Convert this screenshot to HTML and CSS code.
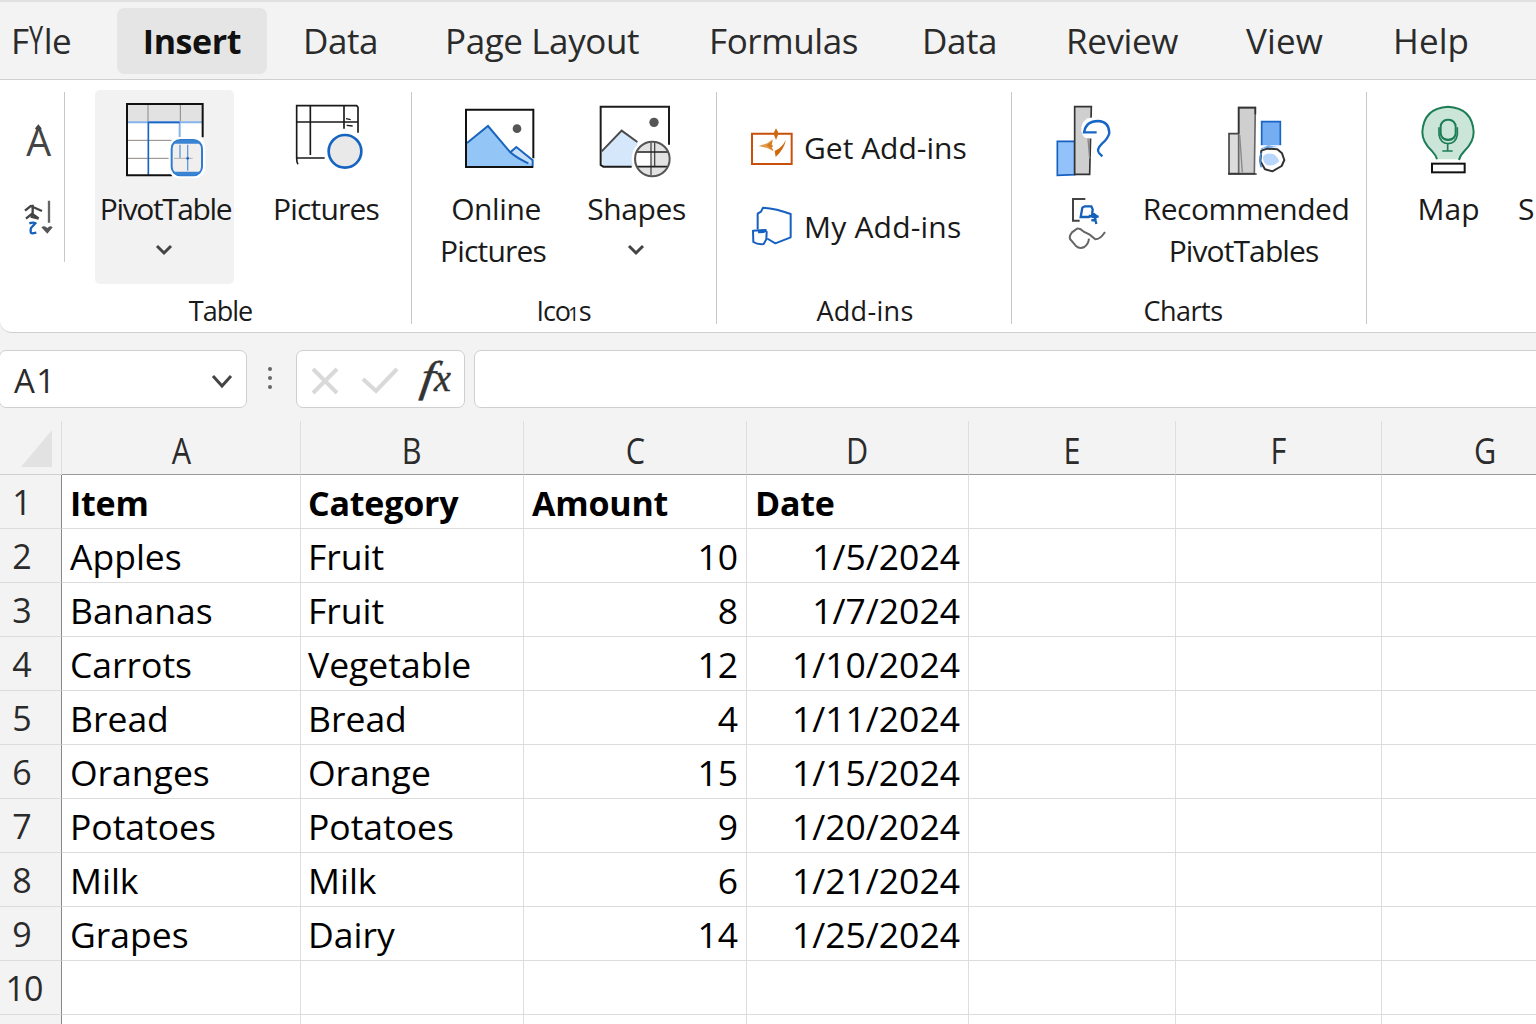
FILE: index.html
```
<!DOCTYPE html>
<html lang="en">
<head>
    <meta charset="UTF-8">
    <meta name="viewport" content="width=device-width, initial-scale=1.0">
    <title>Spreadsheet</title>
    <link rel="stylesheet" href="styles.css">
</head>
<body>
    <nav class="tabs">
        <a class="file">F<span>Y</span>le</a>
        <a class="active">Insert</a>
        <a>Data</a>
        <a>Page Layout</a>
        <a>Formulas</a>
        <a>Data</a>
        <a>Review</a>
        <a class="wide">View</a>
        <a class="wide">Help</a>
    </nav>

    <div class="ribbon">
        <div class="group g-first">
            <svg width="64" height="170" viewBox="0 276 192 510" fill="none" stroke="#444" stroke-width="7">
                <text class="glyph" x="79" y="467">A</text>
                <path d="M108 388l7-9 7 9" stroke-width="8"/>
                <path d="M75 632l17-14 34 15M98 614v34M78 656l18-15 20 14M92 650l24 6"/>
                <path d="M147 602v66" stroke="#666"/>
                <path d="M88 670q12-4 18 0l-13 14q-4 16 4 16l12-2" stroke="#1560bd"/>
                <path d="M124 682q9-8 18 2 9-10 16-2l-16 19z" fill="#555" stroke="none"/>
            </svg>
        </div>

        <div class="group g-table">
            <div class="items">
                <div class="item pivot">
                    <svg class="icon" viewBox="360 294 270 252" fill="none">
                        <path d="M381 312h227v214H381z" fill="#fff"/>
                        <path d="M384 315h222v50H384z" fill="#e2e2e2"/>
                        <path d="M444 315v50M541 315v50M384 421h150M384 475h130" stroke="#8d8682" stroke-width="3"/>
                        <path d="M384 367h222M539 367v45" stroke="#86b4ea" stroke-width="6"/>
                        <path d="M445 524V367h94" stroke="#1763c6" stroke-width="5"/>
                        <path d="M608 412V312H381v214h135" stroke="#111" stroke-width="6"/>
                        <rect x="506" y="411" width="110" height="124" rx="32" fill="#fff"/>
                        <rect x="515" y="420" width="91" height="106" rx="26" fill="#f1eeee" stroke="#2f7dd1" stroke-width="6"/>
                        <path d="M522 431q8-11 24-11h29q16 0 24 11zM522 515q8 11 24 11h29q16 0 24-11z" fill="#3b84d4"/>
                        <path d="M540 434v40M563 434v78" stroke="#5c9be0" stroke-width="4"/>
                        <path d="M522 475h56" stroke="#b5aeac" stroke-width="3"/>
                        <circle cx="563" cy="475" r="4" fill="#1763c6"/>
                    </svg>
                    <div class="label t-pivot">PivotTable</div>
                    <svg class="chev" viewBox="0 0 18 12"><path d="M2 2l7 7 7-7"/></svg>
                </div>
                <div class="item pics">
                    <svg class="icon" viewBox="64 54 270 252" fill="none" stroke="#1a1a1a" stroke-width="5">
                        <path d="M115 253q-4-5-4-18V77h180l4 5v76M111 126h183M152 78v147M253 78v68M111 234h84"/>
                        <path d="M259 116l14 3M261 136l18 2" stroke-width="4"/>
                        <circle cx="256" cy="214" r="49" fill="#e9e9e9" stroke="#1565c0" stroke-width="8"/>
                    </svg>
                    <div class="label t-pics">Pictures</div>
                </div>
            </div>
            <div class="caption c-table">Table</div>
        </div>

        <div class="group g-icons">
            <div class="items">
                <div class="item online">
                    <svg class="icon" viewBox="573 54 270 252" fill="none" stroke-width="6">
                        <path d="M618 89h202v172H618z" fill="#fff"/>
                        <path d="M621 189l63-50 67 78 18-16 49 40v17H621z" fill="#93c6f6"/>
                        <path d="M751 217l18-16 49 40v14z" fill="#c5dffa"/>
                        <path d="M621 189l63-51 67 79 18-16 49 40v18M751 217q20 18 54 33" stroke="#1b65bd"/>
                        <path d="M820 235V89H618v172h202" stroke="#111"/>
                        <circle cx="771" cy="146" r="13" fill="#555"/>
                    </svg>
                    <div class="label t-online">Online</div>
                    <div class="label t-pics second">Pictures</div>
                </div>
                <div class="item shapes">
                    <svg class="icon" viewBox="96 54 270 252" fill="none" stroke-width="6">
                        <path d="M125 216l60-63 48 34-10 72H128z" fill="#d5e8fb"/>
                        <path d="M327 194V80H122v175l8 5h85" stroke="#1c1c1c"/>
                        <path d="M125 214l60-62 47 34" stroke="#4a4a4a"/>
                        <circle cx="282" cy="127" r="14" fill="#555"/>
                        <circle cx="277" cy="237" r="62" fill="#fff"/>
                        <circle cx="277" cy="237" r="52" fill="#e3e3e3"/>
                        <path d="M230 218h42v40h-42z" fill="#fff"/>
                        <path d="M273 187v98M284 187v72" stroke="#4a4a4a" stroke-width="4"/>
                        <path d="M229 216h97M230 260h92" stroke="#222" stroke-width="5"/>
                        <circle cx="277" cy="237" r="52" stroke="#555"/>
                    </svg>
                    <div class="label t-shapes">Shapes</div>
                    <svg class="chev" viewBox="0 0 18 12"><path d="M2 2l7 7 7-7"/></svg>
                </div>
            </div>
            <div class="caption">Ico<span class="one">1</span>s</div>
        </div>

        <div class="group g-addins">
            <div class="rows">
                <div class="row">
                    <svg viewBox="24 135 144 144" fill="none">
                        <path d="M36 161h119v91H36z" stroke="#c8500a" stroke-width="6"/>
                        <path d="M108 145q8 10 6 20l-6 15-6-15q-1-10 6-20z" fill="#cf6a0c"/>
                        <path d="M56 198l26-8 16-12-3 16 4 5-4 3 6 12-20-10z" fill="#e09a4a"/>
                        <path d="M80 196l18-14-4 13 6 3-6 4 6 10z" fill="#d57a1e"/>
                        <path d="M138 180q-7 30-31 51l-3-18 14-8q12-10 20-25z" fill="#cf6a0c"/>
                    </svg>
                    <span>Get Add-ins</span>
                </div>
                <div class="row">
                    <svg viewBox="24 372 144 144" fill="none" stroke="#1560c0" stroke-width="6" stroke-linejoin="round" stroke-linecap="round">
                        <path d="M53 446v-45l10-6 6-12q42 3 83 19v70l-46 18-22-13"/>
                        <path d="M39 452l36-2 5 6-1 22-8 14q-18 2-31-6zM57 457l14-1 6-6"/>
                    </svg>
                    <span class="t-my">My Add-ins</span>
                </div>
            </div>
            <div class="caption c-addins">Add-ins</div>
        </div>

        <div class="group g-charts">
            <div class="items">
                <svg class="stack" viewBox="90 54 210 468" fill="none">
                    <path d="M112 184h52v100l-52 2z" fill="#93c2fa" stroke="#1560c0" stroke-width="5"/>
                    <path d="M164 80h50l-5 203h-45z" fill="#cfcfcf" stroke="#333" stroke-width="5"/>
                    <path d="M220 112q-34 4-36 30-2 26 14 32l22 2z" fill="#fff"/>
                    <path d="M204 175l5 60" stroke="#888" stroke-width="4"/>
                    <path d="M230 157h-38q6-34 42-34 33 1 34 36-4 17-22 32-18 18-9 28l10 10" stroke="#1766c5" stroke-width="7"/>
                    <path d="M196 357h-37v65h20" stroke="#444" stroke-width="6"/>
                    <path d="M187 383l7-4h20l4 9-2 19-10 4h-24zM214 396l18 14M206 407l17 5 13-3M222 402l7 30M214 421l16-2" stroke="#1560b8" stroke-width="7"/>
                    <path d="M207 476q-2 17-14 25-14 7-26-4l-17-20q-3-10 6-20l15-11q9-2 20 9l18 9 17 14q15 0 29-22" stroke="#666" stroke-width="6"/>
                </svg>
                <div class="item rec">
                    <svg class="icon" viewBox="543 54 270 252" fill="none" stroke="#444" stroke-width="5">
                        <path d="M627 161h30v120h-30z" fill="#dcdcdc"/>
                        <path d="M656 83h50l-3 198h-47z" fill="#cfcfcf" stroke="#666"/>
                        <path d="M656 161V83h50v20" stroke="#333"/>
                        <path d="M659 165l8 112" stroke="#888" stroke-width="4"/>
                        <path d="M624 282h86" stroke="#333"/>
                        <path d="M725 206v-81h56v75" fill="#75adf2" stroke="#1766c5"/>
                        <path d="M714 210l30-14 50 8v-8h-80z" fill="#fff" stroke="none"/>
                        <path d="M724 212l18-6 30 2 14 12 7 20-8 18-28 16-22-6-14-24z" fill="#fff" stroke="#333" stroke-width="6" stroke-linejoin="round"/>
                        <path d="M724 262q-8-22 0-44" stroke="#4c8de0"/>
                        <path d="M730 228q12-12 34-4 12 10 14 20-16 16-36 12-16-10-12-28z" fill="#b9d7fb" stroke="none"/>
                    </svg>
                    <div class="label t-rec">Recommended</div>
                    <div class="label t-pts">PivotTables</div>
                </div>
            </div>
            <div class="caption c-charts">Charts</div>
        </div>

        <div class="group g-last">
            <div class="items">
                <div class="item map">
                    <svg class="icon" viewBox="132 54 270 252" fill="none" stroke="#1d7d55" stroke-width="6">
                        <path d="M231 238q-3-12-16-26-28-26-28-56 4-72 77-76 73 4 77 76 0 30-27 56-14 14-17 26z" fill="#cbe5d8" stroke="none"/>
                        <path d="M231 238q-3-12-16-26-28-26-28-56 4-72 77-76 73 4 77 76 0 30-27 56-14 14-17 28"/>
                        <rect x="242" y="119" width="45" height="61" rx="21"/>
                        <path d="M237 142v22q4 26 27 27 24-1 28-27v-22M246 172q18 14 37 0M263 191v22M247 213h31" stroke-width="5"/>
                        <rect x="216" y="251" width="98" height="26" fill="#fff" stroke="#111"/>
                    </svg>
                    <div class="label">Map</div>
                </div>
                <div class="item cut">
                    <div class="label">S</div>
                </div>
            </div>
        </div>
    </div>

    <div class="formula-bar">
        <div class="name-box">
            <span>A1</span>
            <svg width="24" height="16" viewBox="0 0 24 16"><path d="M3 3l9 10 9-10"/></svg>
        </div>
        <div class="dots"><i></i><i></i><i></i></div>
        <div class="fx-box">
            <svg width="92" height="30" viewBox="0 0 92 30"><path d="M3 3l24 24M27 3L3 27M53 13l13 12 21-22"/></svg>
            <span class="fx"><b>f</b><small>x</small></span>
        </div>
        <div class="input"></div>
    </div>

    <table class="sheet">
        <colgroup>
            <col class="cn"><col class="ca"><col class="cb"><col class="cc"><col class="cd"><col class="ce"><col class="cf"><col class="cg">
        </colgroup>
        <thead>
            <tr>
                <th class="corner"><svg width="31" height="37" viewBox="0 0 31 37"><path d="M31 0v37H0z" fill="#e2e2e2"/></svg></th>
                <th><span>A</span></th><th><span>B</span></th><th><span>C</span></th><th><span>D</span></th><th><span>E</span></th><th><span>F</span></th><th><span>G</span></th>
            </tr>
        </thead>
        <tbody>
            <tr class="bold"><th>1</th><td>Item</td><td>Category</td><td>Amount</td><td>Date</td><td></td><td></td><td></td></tr>
            <tr><th>2</th><td>Apples</td><td>Fruit</td><td class="r">10</td><td class="r">1/5/2024</td><td></td><td></td><td></td></tr>
            <tr><th>3</th><td>Bananas</td><td>Fruit</td><td class="r">8</td><td class="r">1/7/2024</td><td></td><td></td><td></td></tr>
            <tr><th>4</th><td>Carrots</td><td>Vegetable</td><td class="r">12</td><td class="r">1/10/2024</td><td></td><td></td><td></td></tr>
            <tr><th>5</th><td>Bread</td><td>Bread</td><td class="r">4</td><td class="r">1/11/2024</td><td></td><td></td><td></td></tr>
            <tr><th>6</th><td>Oranges</td><td>Orange</td><td class="r">15</td><td class="r">1/15/2024</td><td></td><td></td><td></td></tr>
            <tr><th>7</th><td>Potatoes</td><td>Potatoes</td><td class="r">9</td><td class="r">1/20/2024</td><td></td><td></td><td></td></tr>
            <tr><th>8</th><td>Milk</td><td>Milk</td><td class="r">6</td><td class="r">1/21/2024</td><td></td><td></td><td></td></tr>
            <tr><th>9</th><td>Grapes</td><td>Dairy</td><td class="r">14</td><td class="r">1/25/2024</td><td></td><td></td><td></td></tr>
            <tr><th class="ten">10</th><td></td><td></td><td></td><td></td><td></td><td></td><td></td></tr>
            <tr><th></th><td></td><td></td><td></td><td></td><td></td><td></td><td></td></tr>
        </tbody>
    </table>
</body>
</html>
```
FILE: styles.css
```
* {
    box-sizing: border-box;
}
body {
    margin: 0;
    width: 1536px;
    height: 1024px;
    overflow: hidden;
    background: #f3f3f3;
    color: #1a1a1a;
    font-family: "Open Sans", "Noto Sans", sans-serif;
    font-weight: 400;
}
svg {
    display: block;
    flex: none;
}

/* tabs */
.tabs {
    display: grid;
    grid-template-columns: 115px 186px 142px 264px 213px 144px 180px 147px 142px;
    height: 80px;
    padding: 6px 0 0 2px;
    border-top: 2px solid #e0e0e0;
    border-bottom: 1px solid #cfcfcf;
    font-size: 35px;
    line-height: 66px;
    letter-spacing: -0.4px;
    color: #2b2b2b;
    white-space: nowrap;
}
.tabs .file {
    padding-left: 9px;
}
.tabs .file span {
    display: inline-block;
    width: 15px;
    transform: scale(0.72, 1.08);
    transform-origin: 0 70%;
}
.tabs .active {
    width: 150px;
    height: 66px;
    border-radius: 7px;
    background: #e5e5e5;
    font-size: 34px;
    font-weight: 700;
    text-align: center;
    color: #111;
}
.tabs .wide {
    letter-spacing: 0.1px;
}

/* ribbon */
.ribbon {
    display: flex;
    height: 253px;
    padding-top: 12px;
    background: #fff;
    border-bottom: 1px solid #cfcfcf;
    border-bottom-left-radius: 12px;
    font-size: 30px;
    overflow: hidden;
}
.group {
    display: flex;
    flex-direction: column;
    justify-content: space-between;
    flex: none;
    height: 232px;
    border-right: 1px solid #c8c8c8;
}
.g-first {
    width: 65px;
    height: 170px;
}
.g-table {
    width: 347px;
    padding-left: 30px;
}
.g-icons {
    width: 305px;
    padding-left: 24px;
}
.g-addins {
    width: 295px;
    padding-left: 31px;
}
.g-charts {
    width: 355px;
    padding-left: 38px;
}
.g-last {
    width: 220px;
    padding-left: 21px;
    border: 0;
}
.glyph {
    font-size: 118px;
    fill: #444;
    stroke: none;
}
.items {
    display: flex;
    margin-top: -2px;
}
.item {
    display: flex;
    flex-direction: column;
    align-items: center;
    height: 194px;
    padding-top: 8px;
}
.pivot {
    width: 139px;
    border-radius: 5px;
    background: #f2f2f2;
}
.pics {
    width: 140px;
    margin-left: 22px;
}
.online {
    width: 120px;
}
.shapes {
    width: 121px;
    margin-left: 20px;
}
.rec {
    width: 210px;
    margin-left: 21px;
}
.map {
    width: 121px;
}
.cut {
    margin-left: 9px;
    padding-top: 98px;
}
.icon {
    width: 90px;
    height: 84px;
    margin-bottom: 6px;
}
.stack {
    width: 70px;
    height: 156px;
    margin-top: 8px;
}
.label {
    line-height: 42px;
    letter-spacing: 0;
    white-space: nowrap;
}
.chev {
    width: 18px;
    height: 12px;
    margin: 14px 2px 0 0;
}
.chev path {
    fill: none;
    stroke: #444;
    stroke-width: 3;
}
.t-pivot {
    letter-spacing: -1.4px;
    padding-left: 2px;
}
.t-pics {
    letter-spacing: -0.8px;
}
.t-online {
    letter-spacing: -0.4px;
}
.second {
    margin-left: -6px;
}
.t-shapes {
    letter-spacing: -0.4px;
}
.t-rec {
    letter-spacing: -0.5px;
}
.t-pts {
    letter-spacing: -0.9px;
    margin-left: -5px;
}
.t-my {
    letter-spacing: 0.2px;
}
.rows {
    padding-top: 17px;
}
.row {
    display: flex;
    align-items: center;
    gap: 8px;
    height: 79px;
    white-space: nowrap;
}
.row svg {
    width: 48px;
    height: 48px;
}
.row span {
    margin-top: -2px;
}
.caption {
    position: relative;
    top: 2px;
    height: 30px;
    font-size: 27px;
    line-height: 30px;
    text-align: center;
}
.c-table {
    padding-right: 65px;
    letter-spacing: -1px;
}
.g-icons .caption {
    padding-right: 25px;
    letter-spacing: -1.2px;
}
.one {
    display: inline-block;
    width: 9px;
    font-size: 20px;
    line-height: 20px;
    text-indent: -2px;
}
.c-addins {
    padding-right: 29px;
    letter-spacing: 0.3px;
}
.c-charts {
    padding-right: 50px;
    letter-spacing: -0.5px;
}

/* formula bar */
.formula-bar {
    display: flex;
    height: 88px;
    padding-top: 17px;
}
.name-box, .fx-box, .input {
    height: 58px;
    background: #fff;
    border: 1px solid #cfcfcf;
    border-radius: 7px;
}
.name-box {
    display: flex;
    align-items: center;
    justify-content: space-between;
    width: 248px;
    margin-left: -1px;
    padding: 3px 12px 0 14px;
    font-size: 33px;
    letter-spacing: 1.5px;
    color: #2b2b2b;
}
.name-box path {
    fill: none;
    stroke: #444;
    stroke-width: 3;
}
.dots {
    display: flex;
    flex-direction: column;
    gap: 5px;
    width: 49px;
    padding: 17px 0 0 21px;
}
.dots i {
    width: 4px;
    height: 4px;
    border-radius: 50%;
    background: #666;
}
.fx-box {
    display: flex;
    align-items: center;
    width: 169px;
    padding: 3px 0 0 13px;
}
.fx-box path {
    fill: none;
    stroke: #d9d9d9;
    stroke-width: 4;
}
.fx {
    margin: -6px 0 0 20px;
    font-family: "Liberation Serif", serif;
    font-style: italic;
    font-size: 43px;
    line-height: 50px;
    color: #333;
    -webkit-text-stroke: 0.5px #333;
}
.fx b {
    display: inline-block;
    font-weight: 400;
    transform: skewX(-8deg) scaleX(1.15);
}
.fx small {
    font-size: 38px;
}
.input {
    flex: 1;
    margin: 0 -8px 0 9px;
}

/* sheet */
.sheet {
    width: 1589px;
    table-layout: fixed;
    border-collapse: separate;
    border-spacing: 0;
    color: #000;
}
.cn { width: 62px; }
.ca { width: 239px; }
.cb { width: 223px; }
.cc { width: 223px; }
.cd { width: 222px; }
.ce { width: 207px; }
.cf { width: 206px; }
.cg { width: 207px; }
.sheet th, .sheet td {
    height: 54px;
    padding: 2px 8px 0;
    line-height: 51px;
    white-space: nowrap;
    overflow: hidden;
    border-right: 1px solid #dedede;
    border-bottom: 1px solid #dcdcdc;
}
.sheet td {
    background: #fff;
    font-size: 35.5px;
}
.sheet td:nth-child(3) {
    padding-left: 7px;
}
.sheet .r {
    text-align: right;
}
.sheet .bold td {
    padding-top: 3px;
    line-height: 50px;
    font-size: 34px;
    font-weight: 700;
    letter-spacing: -0.2px;
}
.sheet th {
    font-weight: 400;
    color: #2b2b2b;
}
.sheet thead th {
    padding: 7px 0 0;
    font-size: 36px;
    line-height: 46px;
    border-bottom-color: #999;
}
.sheet thead span {
    display: inline-block;
    transform: scaleX(0.85);
}
.sheet thead .corner {
    padding: 2px 0 0 21px;
    border-bottom-color: #d0d0d0;
}
.sheet tbody th {
    padding: 2px 17px 0 0;
    font-size: 34px;
    border-right-color: #888;
}
.sheet tbody .ten {
    padding-right: 13px;
    letter-spacing: -1px;
}
```
